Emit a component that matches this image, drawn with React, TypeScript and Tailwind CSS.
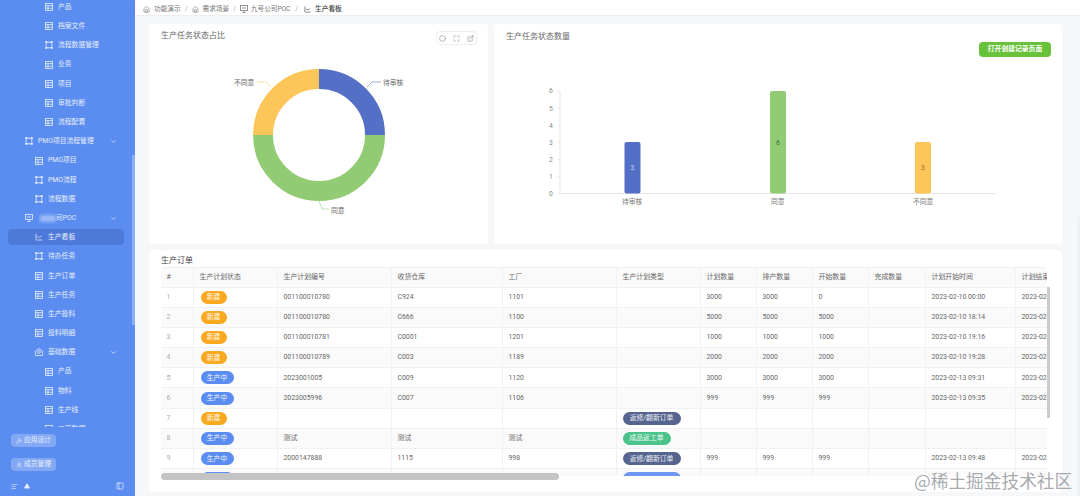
import { ChevronDown, ChartLine, Home, Maximize, Circle, ExternalLink, Hammer, UserRound, AlignLeft, PanelLeft, Triangle } from 'lucide-react';

function TableIcon() {
  return (
    <svg viewBox="0 0 8 8" className="w-2 h-2 shrink-0" fill="none" stroke="currentColor" strokeWidth="0.8">
      <rect x="0.5" y="0.5" width="7" height="7" />
      <path d="M0.5 2.6H7.5M0.5 5.2H7.5M3 2.6V7.5" />
    </svg>
  );
}

function FlowIcon() {
  return (
    <svg viewBox="0 0 8 8" className="w-2 h-2 shrink-0" fill="none" stroke="currentColor" strokeWidth="0.9">
      <path d="M2 1.2H6M2 6.8H6M1.2 2.6V5.4M6.8 2.6V5.4" />
      <rect x="0.2" y="0.2" width="2" height="2" fill="currentColor" stroke="none" />
      <rect x="5.8" y="0.2" width="2" height="2" fill="currentColor" stroke="none" />
      <rect x="0.2" y="5.8" width="2" height="2" fill="currentColor" stroke="none" />
      <rect x="5.8" y="5.8" width="2" height="2" fill="currentColor" stroke="none" />
    </svg>
  );
}

function ScreenIcon() {
  return (
    <svg viewBox="0 0 8 8" className="w-2 h-2 shrink-0" fill="none" stroke="currentColor" strokeWidth="0.8">
      <rect x="0.5" y="0.5" width="7" height="5" />
      <path d="M2 3H6M4 5.5V7.6M2.4 7.6H5.6" />
    </svg>
  );
}

function BoxIcon() {
  return (
    <svg viewBox="0 0 8 8" className="w-2 h-2 shrink-0" fill="none" stroke="currentColor" strokeWidth="0.8">
      <path d="M4 0.5L7.5 3V7.5H0.5V3Z" />
      <circle cx="4" cy="4" r="1.4" />
    </svg>
  );
}

type NavRow = { label: string; level: 1 | 2 | 3; icon: 'table' | 'flow' | 'screen' | 'box' | 'chart'; open?: boolean; active?: boolean; masked?: boolean };

const navRows: NavRow[] = [
  { label: '产品', level: 3, icon: 'table' },
  { label: '档案文件', level: 3, icon: 'table' },
  { label: '流程数据管理', level: 3, icon: 'flow' },
  { label: '业务', level: 3, icon: 'table' },
  { label: '项目', level: 3, icon: 'table' },
  { label: '审批判断', level: 3, icon: 'table' },
  { label: '流程配置', level: 3, icon: 'table' },
  { label: 'PMO项目流程管理', level: 1, icon: 'flow', open: true },
  { label: 'PMO项目', level: 2, icon: 'table' },
  { label: 'PMO流程', level: 2, icon: 'flow' },
  { label: '流程数据', level: 2, icon: 'flow' },
  { label: '司POC', level: 1, icon: 'screen', open: true, masked: true },
  { label: '生产看板', level: 2, icon: 'chart', active: true },
  { label: '待办任务', level: 2, icon: 'flow' },
  { label: '生产订单', level: 2, icon: 'table' },
  { label: '生产任务', level: 2, icon: 'table' },
  { label: '生产投料', level: 2, icon: 'table' },
  { label: '投料明细', level: 2, icon: 'table' },
  { label: '基础数据', level: 2, icon: 'box', open: true },
  { label: '产品', level: 3, icon: 'table' },
  { label: '物料', level: 3, icon: 'table' },
  { label: '生产线', level: 3, icon: 'table' },
  { label: '工艺数据', level: 3, icon: 'table' },
];

function NavIcon({ name }: { name: NavRow['icon'] }) {
  if (name === 'flow') return <FlowIcon />;
  if (name === 'screen') return <ScreenIcon />;
  if (name === 'box') return <BoxIcon />;
  if (name === 'chart') return <ChartLine className="w-2 h-2 shrink-0" strokeWidth={2.2} />;
  return <TableIcon />;
}

function Sidebar() {
  return (
    <aside className="relative w-[135px] shrink-0 h-full bg-[#5b8df0] text-[#e6eefd] flex flex-col text-[6.8px]">
      <nav className="h-[427px] overflow-hidden">
        <div className="-mt-[1px] flex flex-col gap-[3.2px]">
          {navRows.map((row, i) => (
            <div
              key={i}
              className={`h-[16px] ml-2 mr-[11px] rounded-[4px] flex items-center pr-[7px] ${row.active ? 'bg-[#4d79d9]' : ''} ${row.level === 1 ? 'pl-[17px]' : row.level === 2 ? 'pl-[27px]' : 'pl-[37px]'}`}
            >
              <NavIcon name={row.icon} />
              {row.masked && <span className="ml-[7px] w-[16px] h-[7px] bg-white/40 blur-[1.5px]" />}
              <span className={row.masked ? 'ml-0' : 'ml-[5px]'}>{row.label}</span>
              {row.open && <ChevronDown className="ml-auto w-[7px] h-[7px]" strokeWidth={2.5} />}
            </div>
          ))}
        </div>
      </nav>
      <div className="flex-1 flex flex-col pl-[11px] pt-[7px]">
        <button className="w-[45px] h-[13px] rounded-[4px] bg-white/25 flex items-center justify-center gap-[2px] text-[6.8px]">
          <Hammer className="w-[6px] h-[6px]" />
          应用设计
        </button>
        <button className="mt-[11px] w-[45px] h-[13px] rounded-[4px] bg-white/25 flex items-center justify-center gap-[2px] text-[6.8px]">
          <UserRound className="w-[6px] h-[6px]" />
          成员管理
        </button>
        <div className="mt-[11px] flex items-center pr-[11px]">
          <AlignLeft className="w-[7px] h-[7px]" />
          <Triangle className="ml-[6px] w-[6px] h-[6px]" fill="currentColor" />
          <PanelLeft className="ml-auto w-[8px] h-[8px]" />
        </div>
      </div>
      <div className="absolute right-0 top-[155px] w-[3px] h-[170px] bg-white/30" />
    </aside>
  );
}

function Breadcrumb() {
  return (
    <header className="h-4 shrink-0 bg-white border-b border-[#eeeeee] flex items-center pt-[3px] pl-[8px] text-[6.7px] text-[#777777]">
      <Home className="w-[7px] h-[7px]" />
      <span className="ml-[4px]">功能演示</span>
      <span className="mx-[4px] text-[#aaaaaa]">/</span>
      <Home className="w-[7px] h-[7px]" />
      <span className="ml-[4px]">需求场景</span>
      <span className="mx-[4px] text-[#aaaaaa]">/</span>
      <ScreenIcon />
      <span className="ml-[3px] tracking-[-0.1px]">九号公司POC</span>
      <span className="ml-[5px] mr-[6px] text-[#aaaaaa]">/</span>
      <ChartLine className="w-[7px] h-[7px] text-[#444444]" />
      <span className="ml-[4px] text-[#444444] font-medium">生产看板</span>
    </header>
  );
}

function Donut() {
  return (
    <svg viewBox="149 47 339 197" className="block w-[339px] h-[197px]" fill="none">
      <path d="M319 80A56 56 0 0 1 375 136" stroke="#5470c6" strokeWidth="20" />
      <path d="M375 136A56 56 0 0 1 263 136" stroke="#91cc75" strokeWidth="20" />
      <path d="M263 136A56 56 0 0 1 319 80" stroke="#fdc65a" strokeWidth="20" />
      <path d="M367 88L372 83H381" stroke="#5470c6" strokeWidth="0.6" />
      <path d="M271 88L266 83H257" stroke="#fdc65a" strokeWidth="0.6" />
      <path d="M319 202L322 210H329" stroke="#91cc75" strokeWidth="0.6" />
      <text x="383" y="85.5" fontSize="6.8" fill="#666666">待审核</text>
      <text x="234" y="85.5" fontSize="6.8" fill="#666666">不同意</text>
      <text x="331" y="213.5" fontSize="6.8" fill="#666666">同意</text>
    </svg>
  );
}

function BarChart() {
  const bars = [
    { x: 632.5, top: 142, color: '#5470c6', value: '3', label: '待审核', text: '#cfd8f5', lx: 622 },
    { x: 778, top: 91, color: '#91cc75', value: '6', label: '同意', text: '#3d6b35', lx: 771 },
    { x: 923, top: 142, color: '#fdc65a', value: '3', label: '不同意', text: '#9a6a20', lx: 913 },
  ];
  return (
    <svg viewBox="494 60 568 184" className="block w-[568px] h-[184px]" fill="none">
      <path d="M560 91V193.5H996" stroke="#dddddd" strokeWidth="0.8" />
      {[0, 1, 2, 3, 4, 5, 6].map((n) => (
        <g key={n}>
          <path d={`M557.5 ${193.5 - n * 17.1}H560`} stroke="#dddddd" strokeWidth="0.6" />
          <text x="549" y={196 - n * 17.1} fontSize="6.8" fill="#888888">{n}</text>
        </g>
      ))}
      {bars.map((b) => (
        <g key={b.x}>
          <rect x={b.x - 8} y={b.top} width="16" height={193.5 - b.top} rx="2" fill={b.color} />
          <text x={b.x} y={(b.top + 193.5) / 2 + 2.5} fontSize="6.8" fill={b.text} textAnchor="middle">{b.value}</text>
          <text x={b.lx} y="203.5" fontSize="6.8" fill="#777777">{b.label}</text>
        </g>
      ))}
    </svg>
  );
}

type Pill = { text: string; cls: string };
const xinjian: Pill = { text: '新建', cls: 'w-[26px] ml-[1px] bg-[#f9a91f]' };
const shengchan: Pill = { text: '生产中', cls: 'w-[33px] ml-[1px] bg-[#5b8df0]' };
const fanxiu: Pill = { text: '返修/翻新订单', cls: 'w-[58px] bg-[#56658f]' };
const fangong: Pill = { text: '成品返工单', cls: 'w-[48px] bg-[#4cc38a]' };
const blueType: Pill = { text: '', cls: 'w-[58px] bg-[#6f97f2]' };

const columns = ['#', '生产计划状态', '生产计划编号', '收货仓库', '工厂', '生产计划类型', '计划数量', '排产数量', '开始数量', '完成数量', '计划开始时间', '计划结束时间'];

const orders: { status: Pill; no?: string; wh?: string; plant?: string; type?: Pill; plan?: string; sched?: string; start?: string; time?: string; end?: string }[] = [
  { status: xinjian, no: '001100010780', wh: 'C924', plant: '1101', plan: '3000', sched: '3000', start: '0', time: '2023-02-10 00:00', end: '2023-02-10' },
  { status: xinjian, no: '001100010780', wh: 'C666', plant: '1100', plan: '5000', sched: '5000', start: '5000', time: '2023-02-10 18:14', end: '2023-02-10' },
  { status: xinjian, no: '001100010781', wh: 'C0001', plant: '1201', plan: '1000', sched: '1000', start: '1000', time: '2023-02-10 19:16', end: '2023-02-10' },
  { status: xinjian, no: '001100010789', wh: 'C003', plant: '1189', plan: '2000', sched: '2000', start: '2000', time: '2023-02-10 19:28', end: '2023-02-10' },
  { status: shengchan, no: '2023001005', wh: 'C009', plant: '1120', plan: '3000', sched: '3000', start: '3000', time: '2023-02-13 09:31', end: '2023-02-13' },
  { status: shengchan, no: '2023005996', wh: 'C007', plant: '1106', plan: '999', sched: '999', start: '999', time: '2023-02-13 09:35', end: '2023-02-13' },
  { status: xinjian, type: fanxiu },
  { status: shengchan, no: '测试', wh: '测试', plant: '测试', type: fangong },
  { status: shengchan, no: '2000147888', wh: '1115', plant: '998', type: fanxiu, plan: '999', sched: '999', start: '999', time: '2023-02-13 09:48', end: '2023-02-13' },
  { status: shengchan, type: blueType },
];

function StatusPill({ pill }: { pill: Pill }) {
  return (
    <span className={`h-[13px] rounded-full text-white/90 text-[6.8px] flex items-center justify-center shrink-0 ${pill.cls}`}>{pill.text}</span>
  );
}

function OrdersTable() {
  const grid = 'grid grid-cols-[33px_84px_114px_111px_114px_84px_56px_56px_56px_57px_90px_90px] w-[945px]';
  const cell = 'border-r border-b border-[#f0f1f3] px-[5.5px] flex items-center whitespace-nowrap overflow-hidden';
  return (
    <div className="relative h-[213px]">
      <div className="w-[886px] h-[209px] overflow-hidden rounded-t border-t border-[#eeeeee] text-[6.9px] text-[#666666]">
        <div className={`${grid} h-[19.5px] bg-[#fafafa]`}>
          {columns.map((c) => (
            <div key={c} className={cell}>{c}</div>
          ))}
        </div>
        {orders.map((o, i) => (
          <div key={i} className={`${grid} h-[20.2px] ${i % 2 === 1 ? 'bg-[#fafafa]' : 'bg-white'}`}>
            <div className={`${cell} text-[#aaaaaa]`}>{i < 9 ? i + 1 : ''}</div>
            <div className={cell}><StatusPill pill={o.status} /></div>
            <div className={cell}>{o.no}</div>
            <div className={cell}>{o.wh}</div>
            <div className={cell}>{o.plant}</div>
            <div className={cell}>{o.type && <StatusPill pill={o.type} />}</div>
            <div className={cell}>{o.plan}</div>
            <div className={cell}>{o.sched}</div>
            <div className={cell}>{o.start}</div>
            <div className={cell} />
            <div className={cell}>{o.time}</div>
            <div className={cell}>{o.end}</div>
          </div>
        ))}
      </div>
      <div className="absolute left-0 top-[206px] h-[7px] w-[398px] rounded-full bg-[#c4c4c4]" />
      <div className="absolute right-0 top-[20px] h-[131px] w-[3px] bg-[#cccccc]" />
    </div>
  );
}

export default function App() {
  return (
    <div className="relative w-[1080px] h-[496px] overflow-hidden flex bg-[#f6f7f9] font-['Roboto','Noto_Sans_CJK_SC',sans-serif]">
      <Sidebar />
      <main className="flex-1 min-w-0 flex flex-col">
        <Breadcrumb />
        <div className="flex flex-col gap-[6px] pl-[14px] pr-[18px] pt-2">
          <div className="flex gap-[6px] h-[220px]">
            <section className="w-[339px] bg-white rounded">
              <div className="h-[22px] pl-3 pr-[11px] flex justify-between items-start">
                <h2 className="mt-[7px] text-[8px] leading-[10px] text-[#666666]">生产任务状态占比</h2>
                <div className="mt-[7px] w-[41px] h-[14px] border border-[#eeeeee] rounded-sm flex items-center justify-center gap-[7px] text-[#888888]">
                  <Circle className="w-[7px] h-[7px]" />
                  <Maximize className="w-[7px] h-[7px]" />
                  <ExternalLink className="w-[7px] h-[7px]" />
                </div>
              </div>
              <Donut />
            </section>
            <section className="flex-1 bg-white rounded">
              <div className="h-[36px] pl-3 pr-[11px] flex justify-between items-start">
                <h2 className="mt-[8px] text-[8px] leading-[10px] text-[#666666]">生产任务状态数量</h2>
                <button className="mt-[18px] w-[72px] h-[15px] rounded bg-[#67c23a] text-white text-[6.8px] font-bold">打开创建记录页面</button>
              </div>
              <BarChart />
            </section>
          </div>
          <section className="h-[242px] bg-white rounded px-3">
            <h2 className="h-[17px] pt-[6px] text-[8px] leading-[10px] text-[#444444]">生产订单</h2>
            <OrdersTable />
          </section>
        </div>
      </main>
      <div className="absolute right-0 top-[217px] w-[3px] h-[279px] bg-[#eff0f2]" />
      <div className="absolute left-[914px] top-[469px] text-[17.7px] leading-[22px] text-[#8f9399]/80 font-['Noto_Sans_CJK_SC',sans-serif] whitespace-nowrap">@稀土掘金技术社区</div>
    </div>
  );
}
